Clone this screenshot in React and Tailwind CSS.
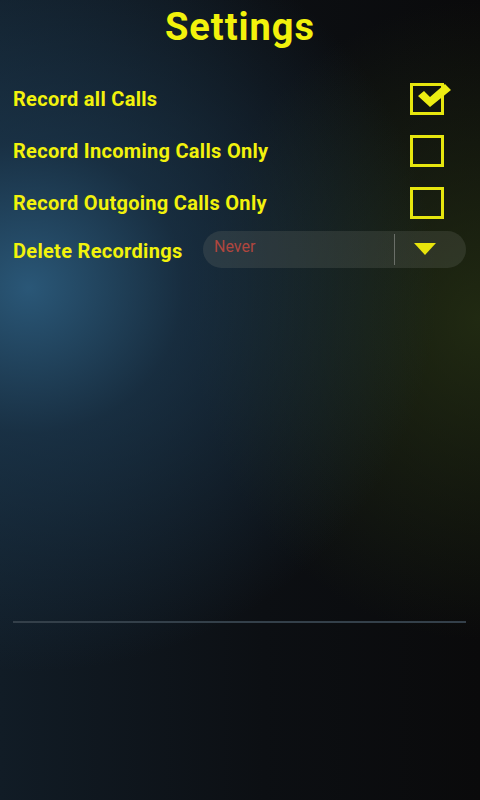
import React from "react";

const yellow = "text-[#f2f20c]";

function CheckBox({ checked }) {
  return (
    <div className="relative h-[32px] w-[34px] border-[3px] border-[#e6e60e]">
      {checked && (
        <svg
          className="absolute left-[2px] top-[-5px]"
          width="38"
          height="30"
          viewBox="0 0 38 30"
        >
          <path d="M3 15 L9 10 L15 16 L30 3 L36 9 L15 26 Z" fill="#ecec12" />
        </svg>
      )}
    </div>
  );
}

function Row({ label, checked }) {
  return (
    <div className="flex h-[52px] items-center justify-between pl-[13px] pr-[36px]">
      <span className={`text-[20px] font-bold tracking-[0.3px] ${yellow}`}>{label}</span>
      <CheckBox checked={checked} />
    </div>
  );
}

export default function App() {
  return (
    <div
      className="relative h-[800px] w-full overflow-hidden bg-[#0a0c0f] bg-[radial-gradient(ellipse_85%_48%_at_6%_36%,rgba(44,92,126,0.92)_0%,rgba(30,62,88,0.6)_38%,rgba(14,22,30,0)_100%),radial-gradient(ellipse_60%_40%_at_100%_40%,rgba(40,52,20,0.75)_0%,rgba(14,16,12,0)_100%),linear-gradient(90deg,#111c26_0%,#0c0f13_55%,#0a0a0b_100%)]"
      style={{ fontFamily: "Roboto, 'Liberation Sans', sans-serif" }}
    >
      <h1 className={`pt-[3px] text-center text-[38px] font-bold leading-[48px] tracking-[1px] ${yellow}`}>
        Settings
      </h1>
      <div className="mt-[22px] flex flex-col">
        <Row label="Record all Calls" checked />
        <Row label="Record Incoming Calls Only" />
        <Row label="Record Outgoing Calls Only" />
        <div className="flex h-[44px] items-center pl-[13px] pr-[14px]">
          <span className={`text-[20px] font-bold tracking-[0.3px] ${yellow}`}>Delete Recordings</span>
          <div className="ml-auto mb-[4px] flex h-[37px] w-[263px] items-center rounded-full bg-[rgba(120,125,115,0.22)]">
            <span className="mb-[5px] flex-1 pl-[11px] text-[16px] text-[#b0463e]">Never</span>
            <div className="h-[31px] w-px bg-[#6a6f68]" />
            <div className="flex w-[71px] items-center pl-[19px]">
              <svg width="22" height="12" viewBox="0 0 22 12">
                <path d="M0 0 H22 L11 12 Z" fill="#e8e40c" />
              </svg>
            </div>
          </div>
        </div>
      </div>
      <div className="absolute left-[13px] right-[14px] top-[621px] h-[2px] bg-[#34404a]" />
    </div>
  );
}
